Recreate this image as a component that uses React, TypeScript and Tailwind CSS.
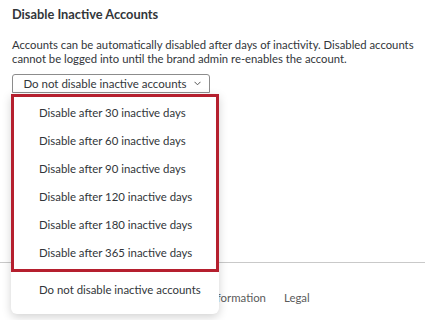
import React from 'react';

const options = [30, 60, 90, 120, 180, 365];

const App: React.FC = () => {
    return (
        <div className="w-[425px] h-[320px] overflow-hidden bg-white text-[#32363a] font-['Lato','Liberation_Sans',sans-serif]">
            <div className="px-3 pt-[5px]">
                <h2 className="text-[12.8px] font-bold leading-[18px]">Disable Inactive Accounts</h2>
                <p className="mt-[15px] w-[410px] text-[11.3px] leading-[14px]">
                    Accounts can be automatically disabled after days of inactivity. Disabled accounts cannot be logged into until the brand admin re-enables the account.
                </p>

                <div className="relative mt-[8px] h-[188px]">
                    <button className="flex h-[19px] w-[198px] items-center justify-center gap-[7px] rounded-t-[3px] border border-[#8c8c8c] bg-white pl-[2px] text-[11.5px] leading-none">
                        <span>Do not disable inactive accounts</span>
                        <svg width="7" height="5" viewBox="0 0 7 5" fill="none" stroke="#555" strokeWidth="1">
                            <path d="M0.5 0.8 L3.5 3.8 L6.5 0.8" />
                        </svg>
                    </button>

                    <div className="absolute left-[-1px] top-[20px] z-10 w-[208px] rounded-b-[6px] bg-white pb-[14px] shadow-[0_3px_10px_rgba(0,0,0,0.18)]">
                        <div className="border-[3px] border-[#b51f2e] py-[2px]">
                            {options.map((d) => (
                                <div key={d} className="flex h-[28px] items-center pl-[25px] text-[11.4px]">
                                    Disable after {d} inactive days
                                </div>
                            ))}
                        </div>
                        <div className="flex h-[28px] items-center pl-[28px] pt-[7px] text-[11.4px]">
                            Do not disable inactive accounts
                        </div>
                    </div>
                </div>
            </div>

            <div className="border-t border-[#c9c9c9]">
                <div className="flex gap-[18px] pl-[165px] pt-[26px] text-[11.4px] text-[#5b5b5b]">
                    <span>Contact Information</span>
                    <span>Legal</span>
                </div>
            </div>
        </div>
    );
};

export default App;
